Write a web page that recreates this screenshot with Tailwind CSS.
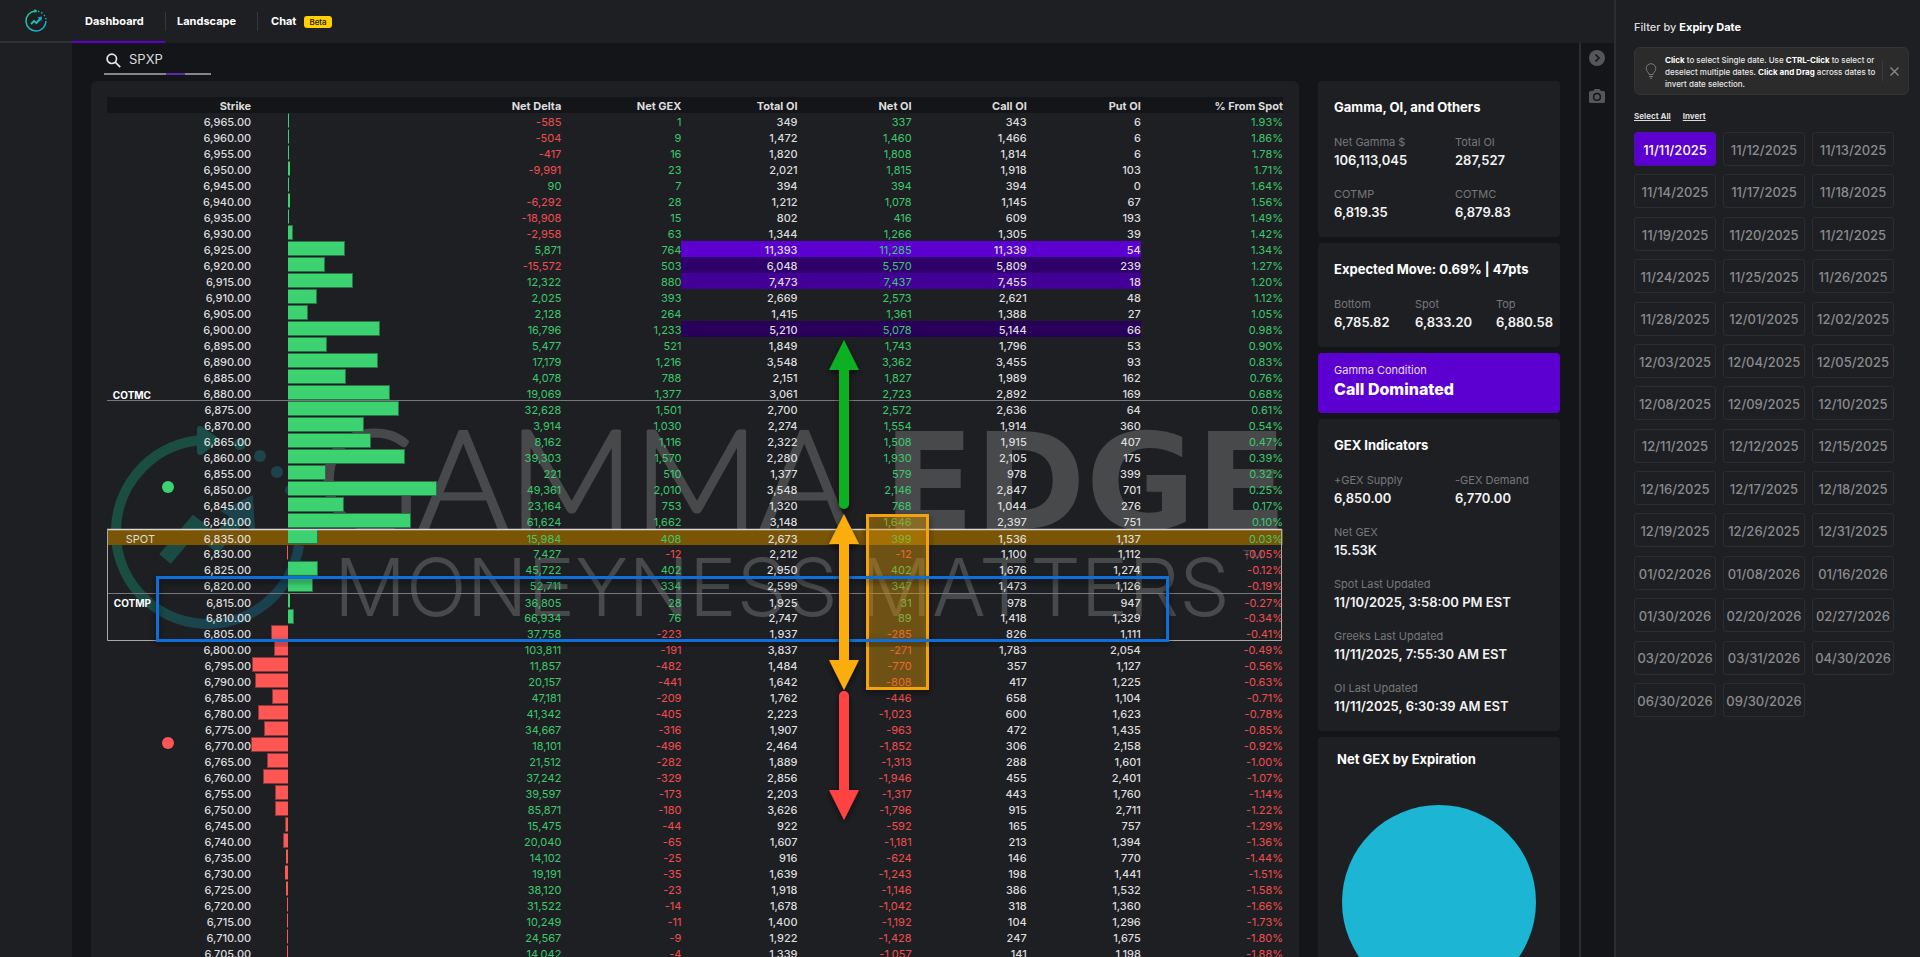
<!DOCTYPE html>
<html lang="en">
<head>
    <meta charset="UTF-8">
    <meta name="viewport" content="width=device-width, initial-scale=1.0">
    <title>GammaEdge Dashboard</title>
    <script src="https://cdn.jsdelivr.net/npm/@tailwindcss/browser@4"></script>
</head>
<body class="flex h-screen overflow-hidden bg-[#141519] font-['Inter',sans-serif] text-[#dcdcdc]">
    <div class="flex min-w-0 flex-1 flex-col">
        <!-- Top navigation -->
        <header class="flex h-[43px] shrink-0 bg-[#1e1f23]">
            <a href="#" aria-label="Home" class="flex w-[72px] items-center justify-center border-b-2 border-[#303135]">
                <svg width="24" height="24" viewBox="0 0 24 24" fill="none">
                    <defs>
                        <linearGradient id="logo" x1="0" y1="0" x2="1" y2="1"><stop offset="0" stop-color="#22c987"/><stop offset="1" stop-color="#17a9dd"/></linearGradient>
                    </defs>
                    <path d="M11 2A10 10 0 1 0 22 12" stroke="url(#logo)" stroke-width="1.5"/>
                    <path d="M14 2.2A10 10 0 0 1 22 11" stroke="#17a9c0" stroke-width="1.4" stroke-dasharray="1.5 2"/>
                    <path d="M10.5 0l3 2-3 2z" fill="#22c9a7"/>
                    <path d="M7 15l3-3 2.500 2 4-4.500" stroke="#1fc0b0" stroke-width="1.9"/>
                    <path d="M13.500 8.500l4.500-1-.5 4.500z" fill="#17a9dd"/>
                </svg>
            </a>
            <nav class="flex text-[11px] font-bold text-white">
                <a href="#" class="flex w-[93px] items-center border-b-2 border-[#5b00d0] pt-0.5 pl-[13px]">Dashboard</a>
                <a href="#" class="my-3 flex w-[93px] items-center border-x border-[#36373b] pl-[11px]">Landscape</a>
                <a href="#" class="flex items-center gap-2 pl-[13px]">Chat <span class="rounded-[3px] bg-[#ffcf00] px-[5px] text-[8px] leading-3 font-medium text-[#141519]">Beta</span></a>
            </nav>
        </header>

        <div class="flex min-h-0 flex-1">
            <aside class="w-[72px] shrink-0 bg-[#1e1f23]"></aside>

            <main class="flex min-w-0 flex-1 flex-col pl-[19px]">
                <label class="ml-[13px] flex h-8 w-[107px] shrink-0 items-center gap-2 border-b-2 border-[#858588] pt-1">
                    <svg class="ml-0.5 shrink-0" width="15" height="15" viewBox="0 0 15 15" fill="none" stroke="#e6e6e6" stroke-width="1.700" aria-hidden="true"><circle cx="5.800" cy="5.800" r="4.700"/><path d="M9.200 9.200l5 5"/></svg>
                    <input type="text" value="SPXP" aria-label="Symbol" class="w-full min-w-0 bg-transparent text-[13px] outline-none">
                </label>
                <div class="-mt-0.5 ml-[75px] h-0.5 w-[19px] shrink-0 bg-[#5a2aa8]"></div>

                <div class="mt-1.5 flex min-h-0 flex-1">
                    <!-- Strike table -->
                    <section class="min-w-0 flex-1 overflow-hidden rounded-t-md bg-[#1e1f23] px-4 pt-4">
                        <div class="relative isolate">
                            <!-- Watermark -->
                            <svg class="absolute top-0 left-0 -z-10" width="1175" height="860" viewBox="107 97 1175 860" fill="#48494b" stroke-linejoin="round" aria-hidden="true">
                                <defs>
                                    <linearGradient id="ring" gradientUnits="userSpaceOnUse" x1="150" y1="440" x2="310" y2="540"><stop offset="0.300" stop-color="#1a4e41"/><stop offset="0.900" stop-color="#1a4150"/></linearGradient>
                                </defs>
                                <path d="M204 440A92 92 0 1 0 299 545" fill="none" stroke="url(#ring)" stroke-width="10"/>
                                <path d="M200 429l16 11-16 12z" fill="#1a4e47" stroke="#1a4e47" stroke-width="6"/>
                                <circle cx="240" cy="444" r="6" fill="#1a4a48"/>
                                <circle cx="260" cy="456" r="6" fill="#1a464c"/>
                                <circle cx="277" cy="472" r="6" fill="#1a434e"/>
                                <circle cx="290" cy="490" r="5" fill="#1a4150"/>
                                <path d="M165 559l29-34 23 18 24-29" fill="none" stroke="url(#ring)" stroke-width="15" stroke-linejoin="miter"/>
                                <path d="M220 511l33-16 2 36z" fill="#1a434e"/>
                                <text x="317" y="529" stroke="#48494b" stroke-width="3" class="font-['Lato',sans-serif] text-[138px] font-light">GAMMA</text>
                                <text x="883" y="529" class="font-['DejaVu_Sans',sans-serif] text-[134px] font-bold">EDGE</text>
                                <text x="334" y="616" class="font-['Inter',sans-serif] text-[80px] font-light">MONEYNESS</text>
                                <text x="860" y="616" class="font-['Inter',sans-serif] text-[80px] font-light">MATTERS</text>
                                <text x="1242" y="576" class="font-['Inter',sans-serif] text-[36px] font-light">™</text>
                            </svg>

                            <table class="w-full table-fixed border-collapse text-right text-[11px] leading-4">
                                <colgroup>
                                    <col class="w-[48px]"><col class="w-[41px]"><col class="w-[55px]"><col class="w-[186px]"><col class="w-[124px]"><col class="w-[120px]"><col class="w-[116px]"><col class="w-[114px]"><col class="w-[115px]"><col class="w-[114px]"><col class="w-[142px]">
                                </colgroup>
                                <thead class="bg-[#141519]">
                                    <tr class="[&>th]:pt-0.5 [&>th]:leading-3.5 [&>th]:font-bold">
                                        <th></th><th></th><th>Strike</th><th></th><th>Net Delta</th><th>Net GEX</th><th>Total OI</th><th>Net OI</th><th>Call OI</th><th>Put OI</th><th>% From Spot</th>
                                    </tr>
                                </thead>
                                <tbody id="strikes"></tbody>
                            </table>

                            <!-- Levels and drawn annotations -->
                            <svg class="absolute top-0 left-0" width="1175" height="860" viewBox="107 97 1175 860" fill="none" aria-hidden="true">
                                <defs>
                                    <filter id="shade" x="-50%" y="-5%" width="200%" height="115%"><feDropShadow dx="0" dy="3" stdDeviation="3" flood-color="#000" flood-opacity="0.600"/></filter>
                                </defs>
                                <path d="M107 400.500h1175M107 593.500h1175" stroke="#77787b"/>
                                <path d="M107 529.500h1175" stroke="#d8d8d8" stroke-width="1.500"/>
                                <path d="M107.500 529v111.500h1174V529" stroke="#a9a9ab"/>
                                <g filter="url(#shade)"><rect x="867.500" y="515.500" width="60" height="173" fill="#fbad09" fill-opacity="0.300" stroke="#f2a30b" stroke-width="3"/></g>
                                <g filter="url(#shade)"><rect x="157.500" y="577.500" width="1010" height="63" stroke="#0f70da" stroke-width="3"/></g>
                                <g filter="url(#shade)">
                                    <path d="M844 340l15 30h-10v134a5 5 0 0 1-10 0V370h-10z" fill="#08b020"/>
                                    <path d="M844 514l15 30h-10v116h10l-15 30-15-30h10V544h-10z" fill="#fbad09"/>
                                    <path d="M839 696a5 5 0 0 1 10 0v94h10l-15 30-15-30h10z" fill="#ff4343"/>
                                </g>
                            </svg>
                        </div>
                    </section>

                    <!-- Summary cards -->
                    <div class="mr-[19px] ml-[19px] flex w-[242px] shrink-0 flex-col gap-1.5 overflow-hidden text-[13px] leading-[18px] [&>section]:shrink-0">
                        <section class="rounded bg-[#1e1f23] p-4">
                            <h2 class="mb-4 leading-5 font-bold text-white">Gamma, OI, and Others</h2>
                            <dl class="grid grid-cols-[121px_auto] gap-y-4 [&_dd]:font-semibold [&_dd]:text-[#f2f2f2] [&_dt]:text-[11px] [&_dt]:text-[#76777a]">
                                <div><dt>Net Gamma $</dt><dd>106,113,045</dd></div>
                                <div><dt>Total OI</dt><dd>287,527</dd></div>
                                <div><dt>COTMP</dt><dd>6,819.35</dd></div>
                                <div><dt>COTMC</dt><dd>6,879.83</dd></div>
                            </dl>
                        </section>
                        <section class="rounded bg-[#1e1f23] p-4">
                            <h2 class="mb-4 leading-5 font-bold text-white">Expected Move: 0.69% | 47pts</h2>
                            <dl class="grid grid-cols-[81px_81px_auto] [&_dd]:font-semibold [&_dd]:text-[#f2f2f2] [&_dt]:text-[11px] [&_dt]:text-[#76777a]">
                                <div><dt>Bottom</dt><dd>6,785.82</dd></div>
                                <div><dt>Spot</dt><dd>6,833.20</dd></div>
                                <div><dt>Top</dt><dd>6,880.58</dd></div>
                            </dl>
                        </section>
                        <section class="flex h-[60px] flex-col rounded bg-[#5b00d0] px-4 pt-2">
                            <p class="text-[11px] text-[#e8defa]">Gamma Condition</p>
                            <p class="text-[16px] leading-5 font-extrabold text-white">Call Dominated</p>
                        </section>
                        <section class="rounded bg-[#1e1f23] p-4">
                            <h2 class="mb-4 leading-5 font-bold text-white">GEX Indicators</h2>
                            <dl class="grid grid-cols-[121px_auto] gap-y-4 [&_dd]:font-semibold [&_dd]:text-[#f2f2f2] [&_dt]:text-[11px] [&_dt]:text-[#76777a]">
                                <div><dt>+GEX Supply</dt><dd>6,850.00</dd></div>
                                <div><dt>-GEX Demand</dt><dd>6,770.00</dd></div>
                                <div class="col-span-2"><dt>Net GEX</dt><dd>15.53K</dd></div>
                                <div class="col-span-2"><dt>Spot Last Updated</dt><dd>11/10/2025, 3:58:00 PM EST</dd></div>
                                <div class="col-span-2"><dt>Greeks Last Updated</dt><dd>11/11/2025, 7:55:30 AM EST</dd></div>
                                <div class="col-span-2"><dt>OI Last Updated</dt><dd>11/11/2025, 6:30:39 AM EST</dd></div>
                            </dl>
                        </section>
                        <section class="rounded-t bg-[#1e1f23] px-[19px] pt-3 pb-4">
                            <h2 class="leading-5 font-bold text-white">Net GEX by Expiration</h2>
                            <svg class="mx-auto mt-9" width="194" height="194" viewBox="0 0 194 194" role="img" aria-label="Net GEX by Expiration"><circle cx="97" cy="97" r="97" fill="#1cb5d3"/></svg>
                        </section>
                    </div>
                </div>
            </main>

            <!-- Panel tools -->
            <div class="flex w-[35px] shrink-0 flex-col items-center gap-5 border-l-2 border-[#2c2d30] pt-1.5 pr-0.5">
                <button type="button" aria-label="Collapse panel">
                    <svg width="18" height="18" viewBox="0 0 18 18"><circle cx="9" cy="9" r="8" fill="#55565a"/><path d="M7.500 5.500L11 9l-3.500 3.500" fill="none" stroke="#141519" stroke-width="1.600"/></svg>
                </button>
                <button type="button" aria-label="Take screenshot">
                    <svg width="18" height="18" viewBox="0 0 18 18" fill="#55565a"><path fill-rule="evenodd" d="M6.500 2h5L13 4h2.500Q17 4 17 5.500v9q0 1.500-1.500 1.500h-13Q1 16 1 14.500v-9Q1 4 2.500 4H5zM9 5.800a4.100 4.100 0 1 0 0 8.200 4.100 4.100 0 0 0 0-8.200zM9 7.300a2.600 2.600 0 1 1 0 5.200 2.600 2.600 0 0 1 0-5.200z"/></svg>
                </button>
            </div>
        </div>
    </div>

    <!-- Expiry filter -->
    <aside class="w-[306px] shrink-0 border-l-2 border-[#2c2d30] bg-[#1e1f23] pt-[17px] pr-[11px] pl-[18px]">
        <h2 class="text-[11px] leading-5 font-medium">Filter by <b class="font-bold text-white">Expiry Date</b></h2>
        <div class="mt-2.5 flex h-12 items-center rounded-md border border-[#343436] bg-[#2b2b2b]">
            <svg class="ml-2.5 shrink-0" width="12" height="16" viewBox="0 0 12 16" fill="none" stroke="#77787a" aria-hidden="true"><path d="M4 11.500C4 9.500 1.200 8.500 1.200 5.500a4.800 4.800 0 0 1 9.600 0C10.800 8.500 8 9.500 8 11.500zM4 13.500h4M5 15.200h2"/></svg>
            <p class="ml-2 flex-1 pt-0.5 text-[8px] leading-3 font-medium text-[#e6e6e6]"><b class="font-bold text-white">Click</b> to select Single date. Use <b class="font-bold text-white">CTRL-Click</b> to select or<br>deselect multiple dates. <b class="font-bold text-white">Click and Drag</b> across dates to<br>invert date selection.</p>
            <button type="button" aria-label="Dismiss" class="flex h-5 items-center border-l border-[#3c3c3e] pr-[9px] pl-[7px]">
                <svg width="9" height="9" viewBox="0 0 9 9" stroke="#8b8b8d" stroke-width="1.300"><path d="M.5.500l8 8M8.500.500l-8 8"/></svg>
            </button>
        </div>
        <div class="mt-4 flex gap-3 text-[8px] leading-[10px] font-bold">
            <button type="button" class="underline">Select All</button>
            <button type="button" class="underline">Invert</button>
        </div>
        <div id="dates" class="mt-[11px] grid h-[585px] grid-cols-[82px_82px_82px] content-between gap-x-[7px] text-[13px] font-medium"></div>
    </aside>

    <script>
        // strike, net delta, net gex, total oi, net oi, call oi, put oi, % from spot
        const rows = `
6,965.00 -585 1 349 337 343 6 1.93%
6,960.00 -504 9 1,472 1,460 1,466 6 1.86%
6,955.00 -417 16 1,820 1,808 1,814 6 1.78%
6,950.00 -9,991 23 2,021 1,815 1,918 103 1.71%
6,945.00 90 7 394 394 394 0 1.64%
6,940.00 -6,292 28 1,212 1,078 1,145 67 1.56%
6,935.00 -18,908 15 802 416 609 193 1.49%
6,930.00 -2,958 63 1,344 1,266 1,305 39 1.42%
6,925.00 5,871 764 11,393 11,285 11,339 54 1.34%
6,920.00 -15,572 503 6,048 5,570 5,809 239 1.27%
6,915.00 12,322 880 7,473 7,437 7,455 18 1.20%
6,910.00 2,025 393 2,669 2,573 2,621 48 1.12%
6,905.00 2,128 264 1,415 1,361 1,388 27 1.05%
6,900.00 16,796 1,233 5,210 5,078 5,144 66 0.98%
6,895.00 5,477 521 1,849 1,743 1,796 53 0.90%
6,890.00 17,179 1,216 3,548 3,362 3,455 93 0.83%
6,885.00 4,078 788 2,151 1,827 1,989 162 0.76%
6,880.00 19,069 1,377 3,061 2,723 2,892 169 0.68%
6,875.00 32,628 1,501 2,700 2,572 2,636 64 0.61%
6,870.00 3,914 1,030 2,274 1,554 1,914 360 0.54%
6,865.00 8,162 1,116 2,322 1,508 1,915 407 0.47%
6,860.00 39,303 1,570 2,280 1,930 2,105 175 0.39%
6,855.00 221 510 1,377 579 978 399 0.32%
6,850.00 49,361 2,010 3,548 2,146 2,847 701 0.25%
6,845.00 23,164 753 1,320 768 1,044 276 0.17%
6,840.00 61,624 1,662 3,148 1,646 2,397 751 0.10%
6,835.00 15,984 408 2,673 399 1,536 1,137 0.03%
6,830.00 7,427 -12 2,212 -12 1,100 1,112 -0.05%
6,825.00 45,722 402 2,950 402 1,676 1,274 -0.12%
6,820.00 52,711 334 2,599 347 1,473 1,126 -0.19%
6,815.00 36,805 28 1,925 31 978 947 -0.27%
6,810.00 66,934 76 2,747 89 1,418 1,329 -0.34%
6,805.00 37,758 -223 1,937 -285 826 1,111 -0.41%
6,800.00 103,811 -191 3,837 -271 1,783 2,054 -0.49%
6,795.00 11,857 -482 1,484 -770 357 1,127 -0.56%
6,790.00 20,157 -441 1,642 -808 417 1,225 -0.63%
6,785.00 47,181 -209 1,762 -446 658 1,104 -0.71%
6,780.00 41,342 -405 2,223 -1,023 600 1,623 -0.78%
6,775.00 34,667 -316 1,907 -963 472 1,435 -0.85%
6,770.00 18,101 -496 2,464 -1,852 306 2,158 -0.92%
6,765.00 21,512 -282 1,889 -1,313 288 1,601 -1.00%
6,760.00 37,242 -329 2,856 -1,946 455 2,401 -1.07%
6,755.00 39,597 -173 2,203 -1,317 443 1,760 -1.14%
6,750.00 85,871 -180 3,626 -1,796 915 2,711 -1.22%
6,745.00 15,475 -44 922 -592 165 757 -1.29%
6,740.00 20,040 -65 1,607 -1,181 213 1,394 -1.36%
6,735.00 14,102 -25 916 -624 146 770 -1.44%
6,730.00 19,191 -35 1,639 -1,243 198 1,441 -1.51%
6,725.00 38,120 -23 1,918 -1,146 386 1,532 -1.58%
6,720.00 31,522 -14 1,678 -1,042 318 1,360 -1.66%
6,715.00 10,249 -11 1,400 -1,192 104 1,296 -1.73%
6,710.00 24,567 -9 1,922 -1,428 247 1,675 -1.80%
6,705.00 14,042 -4 1,339 -1,057 141 1,198 -1.88%`.trim().split("\n").map(line => line.split(" "));

        const highlights = {
            "6,925.00": "bg-[#5b00d0]",
            "6,920.00": "bg-[#2f0069]",
            "6,915.00": "bg-[#430096]",
            "6,900.00": "bg-[#290059]"
        };
        const labels = {
            "6,880.00": '<span class="text-[10px] font-bold text-white">COTMC</span>',
            "6,835.00": "SPOT",
            "6,815.00": '<span class="text-[10px] font-bold text-white">COTMP</span>'
        };
        const dots = { "6,850.00": "bg-[#3dd271]", "6,770.00": "bg-[#ff5656]" };

        const minGex = 496, span = 2506;
        const sign = value => value.startsWith("-") ? "text-[#f24e50]" : "text-[#3bc96c]";

        function bar(value) {
            const gex = Number(value.replace(",", ""));
            const width = Math.max(Math.abs(gex) / span * 100, 0.6);
            const zero = minGex / span * 100;
            const left = gex < 0 ? zero - width : zero;
            const color = gex < 0 ? "border-[#8a3a3d] bg-[#ff5656]" : "border-[#2a7547] bg-[#3dd271]";
            const edge = Math.abs(gex) < 40 ? "border-y" : gex < 0 ? "border-y border-l" : "border-y border-r";
            return `<div class="h-[15px] ${edge} ${color}" style="width:${width}%;margin-left:${left}%"></div>`;
        }

        document.getElementById("strikes").innerHTML = rows.map(([strike, delta, gex, total, net, call, put, pct]) => {
            const spot = strike === "6,835.00";
            const low = spot || strike === "6,815.00";
            const mark = highlights[strike] || "";
            const pad = low ? "pt-1 leading-3" : "pt-0.5 leading-3.5";
            const dot = dots[strike] ? `<div class="ml-[7px] h-3 w-3 rounded-full ${dots[strike]}"></div>` : "";
            return `
                <tr class="h-4 ${spot ? 'bg-[#7a5505]' : ''}">
                    <td class="${spot ? 'pt-1 leading-3' : 'pt-1 pr-1 leading-3'}">${labels[strike] || ""}</td>
                    <td class="align-top">${dot}</td>
                    <td class="${pad} font-medium">${strike}</td>
                    <td class="align-top">${bar(gex)}</td>
                    <td class="${pad} ${sign(delta)}">${delta}</td>
                    <td class="${pad} ${sign(gex)}">${gex}</td>
                    <td class="${pad} ${mark} font-medium">${total}</td>
                    <td class="${pad} ${mark} ${sign(net)}">${net}</td>
                    <td class="${pad} ${mark} font-medium">${call}</td>
                    <td class="${pad} ${mark} font-medium">${put}</td>
                    <td class="${pad} ${sign(pct)}">${pct}</td>
                </tr>`;
        }).join("");

        const dates = `11/11/2025 11/12/2025 11/13/2025 11/14/2025 11/17/2025 11/18/2025 11/19/2025 11/20/2025 11/21/2025
            11/24/2025 11/25/2025 11/26/2025 11/28/2025 12/01/2025 12/02/2025 12/03/2025 12/04/2025 12/05/2025
            12/08/2025 12/09/2025 12/10/2025 12/11/2025 12/12/2025 12/15/2025 12/16/2025 12/17/2025 12/18/2025
            12/19/2025 12/26/2025 12/31/2025 01/02/2026 01/08/2026 01/16/2026 01/30/2026 02/20/2026 02/27/2026
            03/20/2026 03/31/2026 04/30/2026 06/30/2026 09/30/2026`.split(/\s+/);

        document.getElementById("dates").innerHTML = dates.map((date, i) => `
            <button type="button" aria-pressed="${i === 0}" class="h-[34px] rounded-[3px] border pt-[3px] ${i === 0 ? 'border-[#4a14a0] bg-[#5b00d0] text-white' : 'border-[#2b2c2f] text-[#8a8b8d]'}">${date}</button>`).join("");
    </script>
</body>
</html>
